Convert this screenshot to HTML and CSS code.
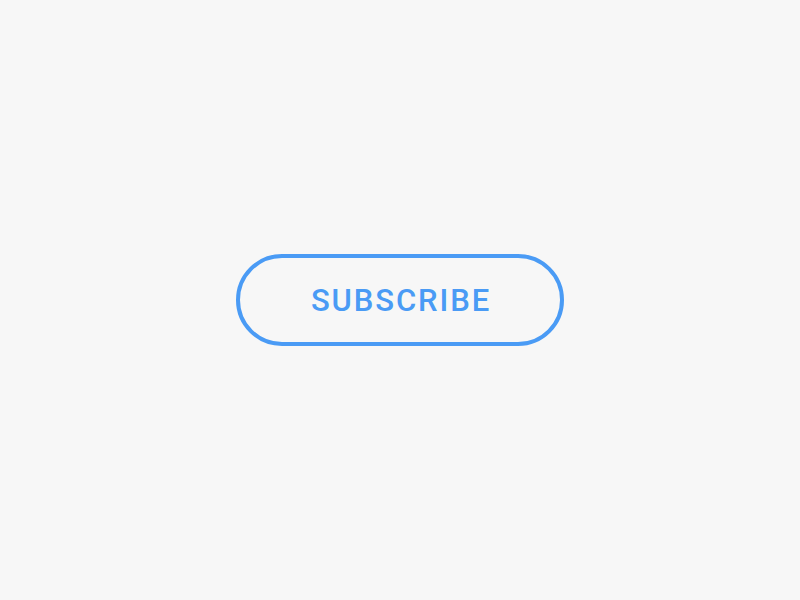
FILE: index.html
```html
<!DOCTYPE html>
<html>
<head>
<meta charset="utf-8">
<link rel="stylesheet" href="styles.css">
</head>
<body>
<main class="stage">
  <button class="subscribe">SUBSCRIBE</button>
</main>
</body>
</html>
```
FILE: styles.css
```css
html, body {
  margin: 0;
  padding: 0;
  width: 800px;
  height: 600px;
  background: #f7f7f7;
}
.stage {
  width: 800px;
  height: 600px;
  display: flex;
  align-items: center;
  justify-content: center;
}
.subscribe {
  box-sizing: border-box;
  width: 328px;
  height: 92px;
  border: 4px solid #4a9bf5;
  border-radius: 46px;
  background: transparent;
  color: #4a9bf5;
  font-family: Roboto, "Liberation Sans", sans-serif;
  font-weight: 500;
  font-size: 31px;
  letter-spacing: 1.9px;
  padding: 0 0 0 2px;
  margin: 0;
}
```
